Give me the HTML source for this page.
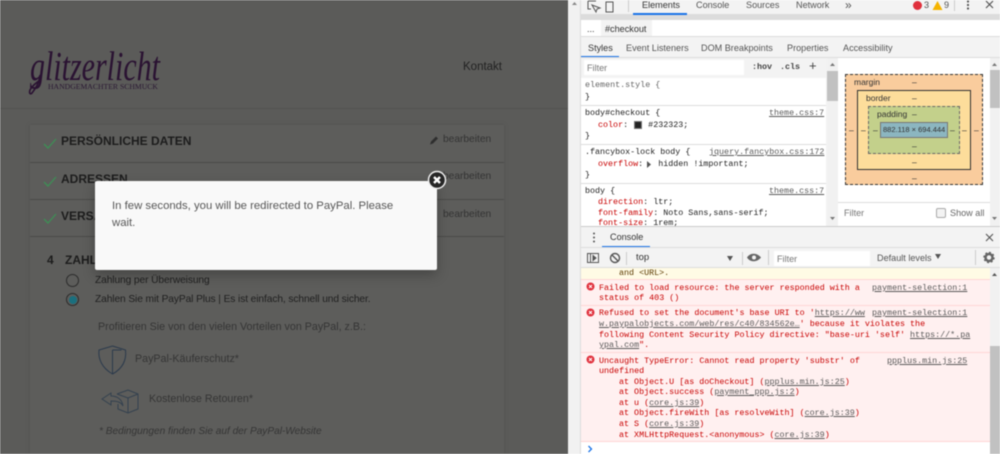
<!DOCTYPE html>
<html><head><meta charset="utf-8"><style>
html,body{margin:0;padding:0;width:1000px;height:454px;overflow:hidden;background:#fff}
#w{position:relative;width:1000px;height:454px;overflow:hidden;filter:blur(.45px)}
.a{position:absolute}
.t{position:absolute;white-space:pre;line-height:12px;font-family:"Liberation Sans",sans-serif}
.d{font-size:9.1px;color:#333}
.m{font-family:"Liberation Mono",monospace;font-size:8.37px;line-height:11px;color:#222}
.r{color:#c80000}
.p{color:#c80000}
.g{color:#5a5a5a;text-decoration:underline}
.h{font-weight:bold;font-size:12px;color:#1c1c1c}
.b{font-size:10.2px;color:#333}
.e{font-size:10.2px;color:#202020;letter-spacing:-.09px}
.f{font-size:10.7px;color:#353535}
.l{height:1px;background:#ddd}
.n{font-size:8.5px;line-height:11px;color:#333}
</style></head><body><div id="w">

<div class="a" style="left:0;top:0;width:568px;height:454px;background:#5b5b59"></div>
<div class="a" style="left:0;top:108px;width:568px;height:1px;background:#535351"></div>
<div class="a" style="left:30px;top:125px;width:474px;height:329px;background:#5d5d5b;box-shadow:0 0 3px #50504e"></div>
<div class="a" style="left:30px;top:162px;width:474px;height:1px;background:#4b4b49"></div>
<div class="a" style="left:30px;top:199px;width:474px;height:1px;background:#4b4b49"></div>
<div class="a" style="left:30px;top:236px;width:474px;height:1px;background:#4b4b49"></div>

<svg class="a" style="left:25px;top:45px" width="145" height="56">
<text x="5" y="35" font-family="Liberation Serif,serif" font-style="italic" font-size="41" fill="#2a1232" textLength="130" lengthAdjust="spacingAndGlyphs">glitzerlicht</text>
<path d="M15 30c-1 9-5 14-8 18-2 2-3 0-2-3 2-4 6-7 10-10" fill="none" stroke="#2a1232" stroke-width="1.6"/>
<text x="23" y="44" font-family="Liberation Serif,serif" font-size="7.4" fill="#2a1833" textLength="110" lengthAdjust="spacingAndGlyphs">HANDGEMACHTER SCHMUCK</text>
</svg>
<div class="t" style="left:463px;top:61px;font-size:11.5px;color:#222">Kontakt</div>

<svg class="a" style="left:42px;top:135px" width="16" height="90" fill="none" stroke="#3d8f55" stroke-width="1.300"><path d="M2 9l4 4 8-9M2 47l4 4 8-9M2 84l4 4 8-9"/></svg>
<div class="t h" style="left:61px;top:135px">PERSÖNLICHE DATEN</div>
<div class="t h" style="left:61px;top:173px">ADRESSEN</div>
<div class="t h" style="left:61px;top:210px">VERSAND</div>
<svg class="a" style="left:429px;top:134px" width="11" height="12"><path d="M1 10.500l1-3 5-5 2 2-5 5z" fill="#2e2e2e"/></svg>
<div class="t b" style="left:443px;top:134px">bearbeiten</div>
<div class="t b" style="left:443px;top:171px">bearbeiten</div>
<div class="t b" style="left:443px;top:209px">bearbeiten</div>

<div class="t h" style="left:47px;top:254px">4</div>
<div class="t h" style="left:65px;top:254px">ZAHLUNG</div>
<div class="a" style="left:66px;top:274px;width:11px;height:11px;border:1.500px solid #2b2b2b;border-radius:50%"></div>
<div class="a" style="left:66px;top:293px;width:11px;height:11px;border:1.500px solid #2b2b2b;border-radius:50%"></div>
<div class="a" style="left:69px;top:296px;width:8px;height:8px;background:#1a6f7e;border-radius:50%"></div>
<div class="t e" style="left:95px;top:275px">Zahlung per Überweisung</div>
<div class="t e" style="left:95px;top:294px">Zahlen Sie mit PayPal Plus | Es ist einfach, schnell und sicher.</div>
<div class="t f" style="left:98px;top:321px">Profitieren Sie von den vielen Vorteilen von PayPal, z.B.:</div>
<svg class="a" style="left:97px;top:344px" width="32" height="32" fill="none" stroke="#2b3a4c" stroke-width="1"><path d="M15.500 2l13 4c1 9-2 18-13 24C5 24 1 15 2 6zM15.500 6v24M15.500 6h9"/></svg>
<div class="t f" style="left:135px;top:353px">PayPal-Käuferschutz*</div>
<svg class="a" style="left:101px;top:388px" width="40" height="26" fill="none" stroke="#34414f" stroke-width="1"><path d="M16 6l11-4 10 4v15l-10 4-10-4v-5M16 6l11 4 10-4M27 10v15M1 11l9-6v3c6 0 11 3 12 10-2-4-6-5-12-5v4z"/></svg>
<div class="t f" style="left:149px;top:393px">Kostenlose Retouren*</div>
<div class="t f" style="left:99px;top:426px;font-style:italic;font-size:10.100px">* Bedingungen finden Sie auf der PayPal-Website</div>

<div class="a" style="left:95px;top:181px;width:342px;height:89px;background:#f9f9f9;border-radius:2px;box-shadow:0 5px 12px rgba(0,0,0,.25)"></div>
<div class="t" style="left:112px;top:200px;font-size:11.350px;color:#575757">In few seconds, you will be redirected to PayPal. Please</div>
<div class="t" style="left:112px;top:217px;font-size:11.350px;color:#575757">wait.</div>
<svg class="a" style="left:427px;top:170px" width="20" height="20"><circle cx="10" cy="10" r="8.500" fill="#262626" stroke="#eee" stroke-width="1.500"/><path d="M7 7l6 6M13 7l-6 6" stroke="#fff" stroke-width="2.400"/></svg>

<div class="a" style="left:568px;top:0;width:432px;height:454px;background:#f3f3f3"></div>
<div class="a" style="left:568px;top:0;width:13px;height:454px;background:#f1f1f1;border-right:1px solid #ddd;box-sizing:border-box"></div>
<svg class="a" style="left:571px;top:1px" width="7" height="5"><path d="M1 4l2.500-3 2.500 3z" fill="#888"/></svg>
<div class="a" style="left:581px;top:0;width:419px;height:14px;background:#f3f3f3"></div>
<div class="a" style="left:581px;top:14px;width:419px;height:6px;background:#dcdcdc"></div>
<svg class="a" style="left:587px;top:0" width="30" height="13" fill="none" stroke="#555" stroke-width="1"><path d="M1 1h8M1 1v8h3M5 5l4 7 1-3 3-1z"/><rect x="19" y="2" width="7" height="10"/></svg>
<div class="a" style="left:628px;top:0;width:1px;height:12px;background:#ccc"></div>
<div class="t d" style="left:642px;top:-1px">Elements</div>
<div class="t d" style="left:696px;top:-1px;color:#555">Console</div>
<div class="t d" style="left:746px;top:-1px;color:#555">Sources</div>
<div class="t d" style="left:796px;top:-1px;color:#555">Network</div>
<div class="a" style="left:633px;top:13px;width:54px;height:2px;background:#1a73e8"></div>
<div class="t d" style="left:845px;top:-1px;color:#555;font-size:12px">»</div>
<div class="a" style="left:913px;top:1px;width:9px;height:9px;border-radius:50%;background:#e0303c"></div>
<div class="t d" style="left:924px;top:-1px;color:#555">3</div>
<svg class="a" style="left:932px;top:1px" width="11" height="10"><path d="M5.500 0l5 9h-10z" fill="#f5b400"/></svg>
<div class="t d" style="left:944px;top:-1px;color:#555">9</div>
<div class="a" style="left:954px;top:0;width:1px;height:11px;background:#ccc"></div>
<svg class="a" style="left:966px;top:0" width="30" height="12"><circle cx="2" cy="1.500" r="1.100" fill="#555"/><circle cx="2" cy="5" r="1.100" fill="#555"/><circle cx="2" cy="8.500" r="1.100" fill="#555"/><path d="M20 1l7 7M27 1l-7 7" stroke="#555" stroke-width="1.200"/></svg>

<div class="a" style="left:581px;top:20px;width:419px;height:16px;background:#fff"></div>
<div class="t d" style="left:587px;top:23px">...</div>
<div class="a" style="left:601px;top:20px;width:51px;height:16px;background:#f3f3f3"></div>
<div class="t d" style="left:605px;top:23px">#checkout</div>
<div class="a" style="left:581px;top:36px;width:419px;height:1px;background:#ddd"></div>
<div class="t d" style="left:588px;top:42px">Styles</div>
<div class="t d" style="left:626px;top:42px;color:#555">Event Listeners</div>
<div class="t d" style="left:701px;top:42px;color:#555">DOM Breakpoints</div>
<div class="t d" style="left:787px;top:42px;color:#555">Properties</div>
<div class="t d" style="left:843px;top:42px;color:#555">Accessibility</div>
<div class="a" style="left:581px;top:56px;width:38px;height:2px;background:#1a73e8"></div>
<div class="a" style="left:581px;top:57px;width:419px;height:1px;background:#ddd"></div>

<div class="a" style="left:581px;top:58px;width:257px;height:20px;background:#f3f3f3"></div>
<div class="a" style="left:584px;top:60px;width:160px;height:15px;background:#fff"></div>
<div class="t d" style="left:587px;top:62px;color:#777">Filter</div>
<div class="t m" style="left:752px;top:62px;font-weight:bold;color:#444">:hov</div>
<div class="t m" style="left:780px;top:62px;font-weight:bold;color:#444">.cls</div>
<div class="t d" style="left:809px;top:60px;font-size:13px;color:#444">+</div>
<div class="a" style="left:581px;top:78px;width:245px;height:148px;background:#fff"></div>
<div class="a l" style="left:581px;top:105px;width:245px"></div>
<div class="a l" style="left:581px;top:144px;width:245px"></div>
<div class="a l" style="left:581px;top:183px;width:245px"></div>

<div class="t m" style="left:585px;top:80px;color:#666">element.style {</div>
<div class="t m" style="left:585px;top:92px">}</div>
<div class="t m" style="left:585px;top:108px">body#checkout {</div>
<div class="t m g" style="left:769px;top:108px">theme.css:7</div>
<div class="t m" style="left:598px;top:120px"><span class="p">color</span>:    #232323;</div>
<div class="a" style="left:634px;top:121px;width:8px;height:8px;background:#232323;border:.5px solid #777;box-sizing:border-box"></div>
<div class="t m" style="left:585px;top:131px">}</div>
<div class="t m" style="left:585px;top:147px">.fancybox-lock body {</div>
<div class="t m g" style="left:709px;top:147px">jquery.fancybox.css:172</div>
<div class="t m" style="left:598px;top:159px"><span class="p">overflow</span>:   hidden !important;</div>
<svg class="a" style="left:646px;top:161px" width="6" height="7"><path d="M1 0l4 3.500-4 3.500z" fill="#555"/></svg>
<div class="t m" style="left:585px;top:170px">}</div>
<div class="t m" style="left:585px;top:186px">body {</div>
<div class="t m g" style="left:769px;top:186px">theme.css:7</div>
<div class="t m" style="left:598px;top:197px"><span class="p">direction</span>: ltr;</div>
<div class="t m" style="left:598px;top:208px"><span class="p">font-family</span>: Noto Sans,sans-serif;</div>
<div class="t m" style="left:598px;top:218px"><span class="p">font-size</span>: 1rem;</div>

<div class="a" style="left:827px;top:58px;width:11px;height:168px;background:#f1f1f1"></div>
<div class="a" style="left:827px;top:71px;width:11px;height:30px;background:#c1c1c1"></div>
<svg class="a" style="left:827px;top:60px" width="11" height="166"><path d="M3 6l2.500-3 2.500 3zM3 157l2.500 3 2.500-3z" fill="#777"/></svg>

<div class="a" style="left:838px;top:58px;width:152px;height:168px;background:#fff"></div>
<div class="a" style="left:845px;top:74px;width:138px;height:111px;background:#f9cc9d;border:1px dashed #333;box-sizing:border-box"></div>
<div class="a" style="left:857px;top:90px;width:114px;height:80px;background:#fddd9b;border:1px solid #333;box-sizing:border-box"></div>
<div class="a" style="left:868px;top:106px;width:92px;height:48px;background:#c3d08b;border:1px dashed #666;box-sizing:border-box"></div>
<div class="a" style="left:880px;top:122px;width:68px;height:16px;background:#8cb6c0;border:1px solid #777;box-sizing:border-box"></div>
<div class="t" style="left:883px;top:125px;font-size:7.500px;line-height:10px;color:#333">882.118 × 694.444</div>
<div class="t n" style="left:854px;top:77px">margin</div>
<div class="t n" style="left:866px;top:93px">border</div>
<div class="t n" style="left:877px;top:109px">padding</div>
<div class="t n" style="left:912px;top:77px">–</div>
<div class="t n" style="left:912px;top:93px">–</div>
<div class="t n" style="left:912px;top:109px">–</div>
<div class="t n" style="left:912px;top:141px">–</div>
<div class="t n" style="left:912px;top:157px">–</div>
<div class="t n" style="left:912px;top:173px">–</div>
<div class="t n" style="left:849px;top:125px">–</div>
<div class="t n" style="left:861px;top:125px">–</div>
<div class="t n" style="left:873px;top:125px">–</div>
<div class="t n" style="left:950px;top:125px">–</div>
<div class="t n" style="left:962px;top:125px">–</div>
<div class="t n" style="left:974px;top:125px">–</div>
<div class="a l" style="left:838px;top:202px;width:152px"></div>
<div class="t d" style="left:844px;top:207px;color:#777">Filter</div>
<div class="a" style="left:936px;top:208px;width:8px;height:8px;background:#f3f3f3;border:1px solid #aaa;border-radius:2px"></div>
<div class="t d" style="left:950px;top:207px;color:#666">Show all</div>
<div class="a" style="left:990px;top:58px;width:10px;height:168px;background:#f1f1f1"></div>
<div class="a" style="left:990px;top:70px;width:10px;height:38px;background:#c1c1c1"></div>
<svg class="a" style="left:990px;top:60px" width="10" height="166"><path d="M2 6l2.500-3 2.500 3zM2 157l2.500 3 2.500-3z" fill="#777"/></svg>

<div class="a" style="left:581px;top:226px;width:419px;height:1px;background:#ccc"></div>
<div class="a" style="left:581px;top:227px;width:419px;height:20px;background:#f3f3f3"></div>
<svg class="a" style="left:592px;top:232px" width="4" height="12"><circle cx="2" cy="1.500" r="1" fill="#555"/><circle cx="2" cy="5.500" r="1" fill="#555"/><circle cx="2" cy="9.500" r="1" fill="#555"/></svg>
<div class="t d" style="left:610px;top:231px">Console</div>
<div class="a" style="left:602px;top:246px;width:48px;height:2px;background:#1a73e8"></div>
<svg class="a" style="left:984px;top:232px" width="11" height="11"><path d="M2 2l7 7M9 2l-7 7" stroke="#555" stroke-width="1.100"/></svg>
<div class="a" style="left:581px;top:247px;width:419px;height:1px;background:#ddd"></div>
<svg class="a" style="left:586px;top:251px" width="180" height="15" fill="none" stroke="#555"><rect x="1.500" y="2.500" width="11" height="9"/><path d="M4.500 2.500v9"/><path d="M7 4.500l3 2.500-3 2.500z" fill="#555"/><circle cx="29" cy="7" r="4.500" stroke-width="1.400"/><path d="M26 4l6 6" stroke-width="1.400"/><path d="M40.500 1v13" stroke="#ccc"/><path d="M141 5l6 0-3 5z" fill="#555" stroke="none"/><path d="M156.500 1v13" stroke="#ccc"/></svg>
<div class="t d" style="left:636px;top:252px;font-size:9.500px">top</div>
<svg class="a" style="left:747px;top:252px" width="14" height="11"><path d="M0 5.500c3-5 10-5 14 0-4 5-11 5-14 0z" fill="#666"/><circle cx="7" cy="5.500" r="2" fill="#f3f3f3"/></svg>
<div class="a" style="left:768px;top:250px;width:1px;height:15px;background:#ccc"></div>
<div class="a" style="left:774px;top:251px;width:96px;height:15px;background:#fff"></div>
<div class="t d" style="left:777px;top:253px;color:#777">Filter</div>
<div class="t d" style="left:877px;top:252px;color:#555">Default levels</div>
<svg class="a" style="left:935px;top:254px" width="7" height="6"><path d="M0 0h6l-3 5z" fill="#555"/></svg>
<div class="a" style="left:975px;top:250px;width:1px;height:15px;background:#ccc"></div>
<svg class="a" style="left:983px;top:251px" width="12" height="13"><circle cx="6" cy="6.500" r="3.500" fill="none" stroke="#666" stroke-width="2.500"/><circle cx="6" cy="6.500" r="5" fill="none" stroke="#666" stroke-width="1.400" stroke-dasharray="2 1.900"/></svg>
<div class="a" style="left:581px;top:267px;width:419px;height:1px;background:#ddd"></div>

<div class="a" style="left:581px;top:268px;width:409px;height:11px;background:#fffbe5"></div>
<div class="t m" style="left:619px;top:268px;color:#5c3b00">and &lt;URL&gt;.</div>
<div class="a" style="left:581px;top:279px;width:409px;height:162px;background:#fff0f0"></div>
<div class="a" style="left:581px;top:279px;width:409px;height:1px;background:#ffd6d6"></div>
<div class="a" style="left:581px;top:305px;width:409px;height:1px;background:#ffd6d6"></div>
<div class="a" style="left:581px;top:352px;width:409px;height:1px;background:#ffd6d6"></div>
<div class="a" style="left:581px;top:441px;width:419px;height:1px;background:#ffd6d6"></div>
<div class="a" style="left:581px;top:442px;width:409px;height:12px;background:#fff"></div>

<svg class="a" style="left:586px;top:282px" width="9" height="90"><g fill="#e0303c"><circle cx="4.500" cy="4.500" r="4"/><circle cx="4.500" cy="30.500" r="4"/><circle cx="4.500" cy="77.500" r="4"/></g><path d="M3 3l3 3M6 3l-3 3M3 29l3 3M6 29l-3 3M3 76l3 3M6 76l-3 3" stroke="#fff" stroke-width="1"/></svg>

<div class="t m r" style="left:599px;top:283px">Failed to load resource: the server responded with a</div>
<div class="t m g" style="left:872px;top:283px">payment-selection:1</div>
<div class="t m r" style="left:599px;top:293px">status of 403 ()</div>
<div class="t m r" style="left:599px;top:308px">Refused to set the document's base URI to '<span class="g">https://ww</span></div>
<div class="t m g" style="left:872px;top:308px">payment-selection:1</div>
<div class="t m r" style="left:599px;top:319px"><span class="g">w.paypalobjects.com/web/res/c40/834562e…</span>' because it violates the</div>
<div class="t m r" style="left:599px;top:330px">following Content Security Policy directive: "base-uri 'self' <span class="g">https://*.pa</span></div>
<div class="t m r" style="left:599px;top:340px"><span class="g">ypal.com</span>".</div>
<div class="t m r" style="left:599px;top:356px">Uncaught TypeError: Cannot read property 'substr' of</div>
<div class="t m g" style="left:887px;top:356px">ppplus.min.js:25</div>
<div class="t m r" style="left:599px;top:366px">undefined</div>
<div class="t m r" style="left:619px;top:377px">at Object.U [as doCheckout] (<span class="g">ppplus.min.js:25</span>)</div>
<div class="t m r" style="left:619px;top:387px">at Object.success (<span class="g">payment_ppp.js:2</span>)</div>
<div class="t m r" style="left:619px;top:398px">at u (<span class="g">core.js:39</span>)</div>
<div class="t m r" style="left:619px;top:408px">at Object.fireWith [as resolveWith] (<span class="g">core.js:39</span>)</div>
<div class="t m r" style="left:619px;top:419px">at S (<span class="g">core.js:39</span>)</div>
<div class="t m r" style="left:619px;top:430px">at XMLHttpRequest.&lt;anonymous&gt; (<span class="g">core.js:39</span>)</div>
<svg class="a" style="left:587px;top:445px" width="7" height="8"><path d="M1.500 1l3 3-3 3" fill="none" stroke="#1a73e8" stroke-width="1.300"/></svg>

<div class="a" style="left:990px;top:268px;width:10px;height:186px;background:#f1f1f1"></div>
<div class="a" style="left:990px;top:346px;width:10px;height:108px;background:#c1c1c1"></div>
<svg class="a" style="left:990px;top:271px" width="10" height="6"><path d="M2 5l2.500-3 2.500 3z" fill="#555"/></svg>
</div></body></html>
